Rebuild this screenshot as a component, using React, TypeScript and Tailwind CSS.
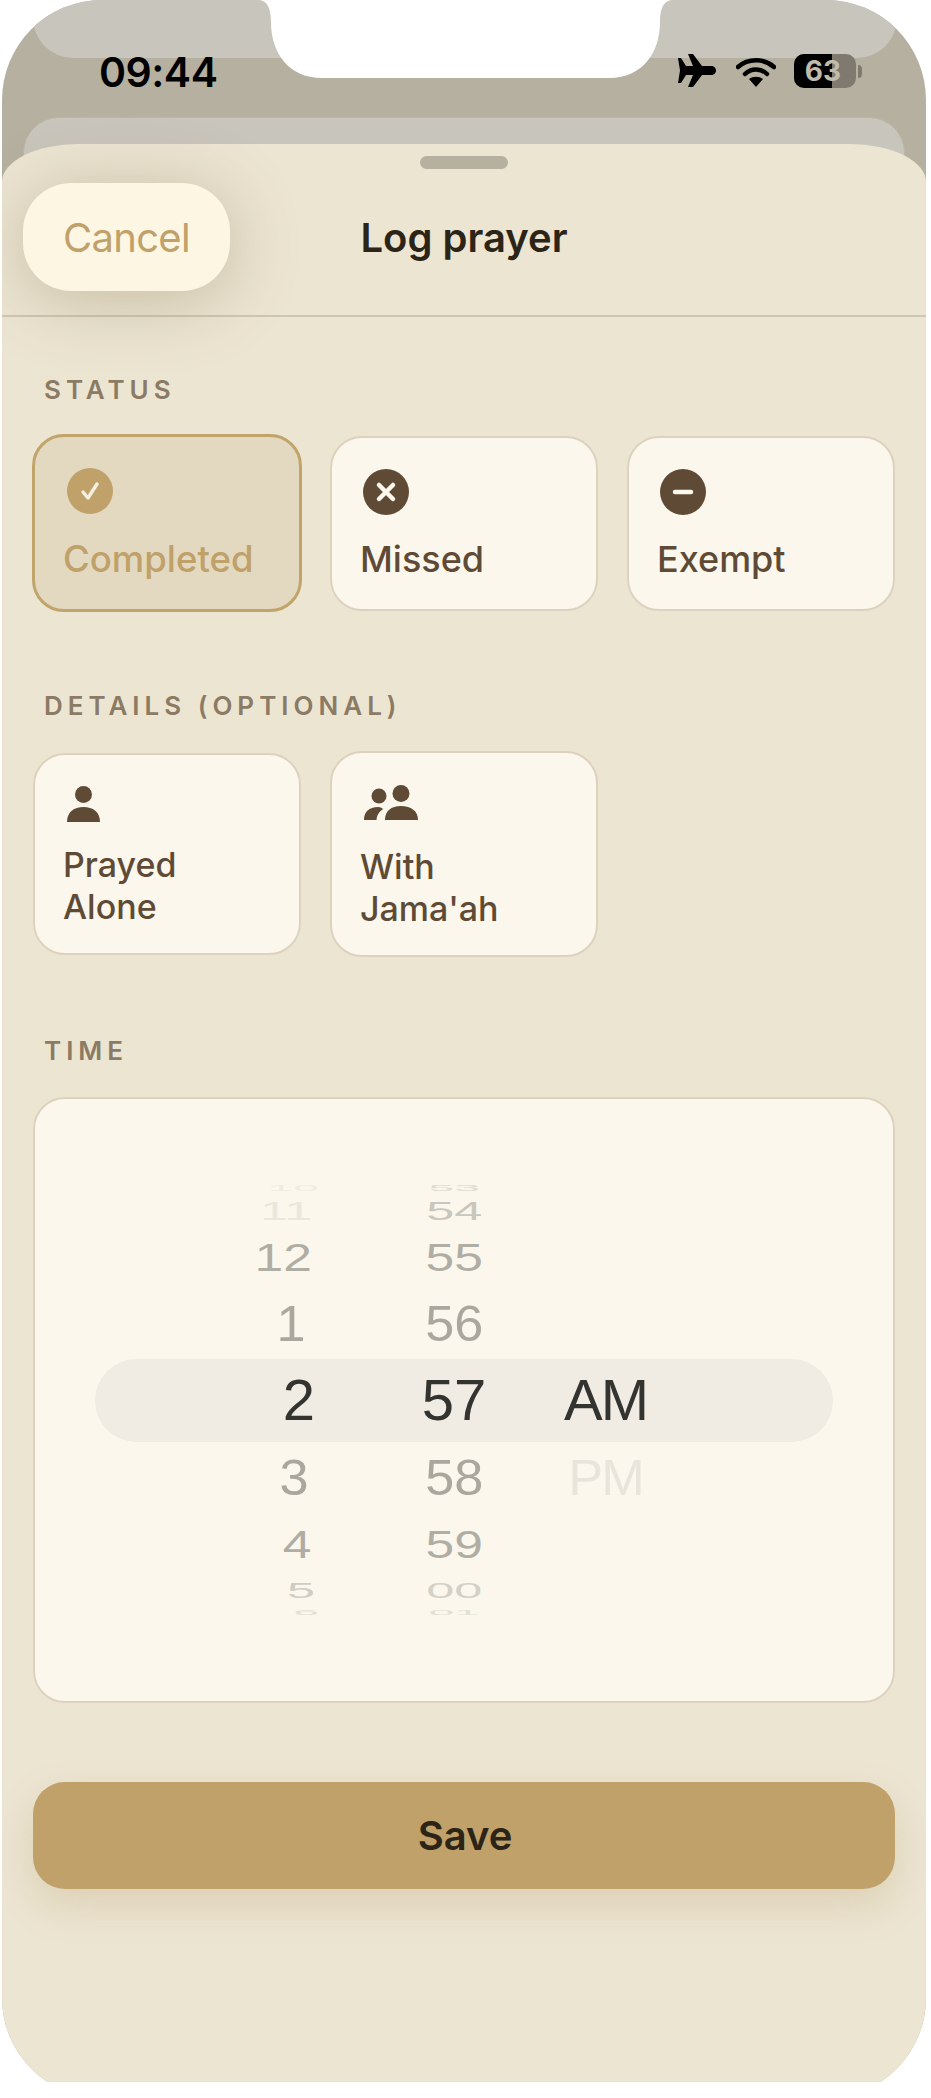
import { ReactNode } from 'react';

const uiFont = "font-['Inter',sans-serif]";

// rows of the time wheel, the outer ones squashed like a drum
const wheelRows = [
  { box: 'h-[6px]', top: '', scale: 'scale-x-[0.8] scale-y-[0.15]', shift: 'translate-x-[-6px]', hour: '10', min: '53', hourColor: 'text-[#efede3]', minColor: 'text-[#dfddd3]', period: '', periodColor: '' },
  { box: 'h-[17px]', top: 'mt-[12px]', scale: 'scale-x-[0.87] scale-y-[0.44]', shift: 'translate-x-[-13px]', hour: '11', min: '54', hourColor: 'text-[#e9e7de]', minColor: 'text-[#c9c7bd]', period: '', periodColor: '' },
  { box: 'h-[27px]', top: 'mt-[25px]', scale: 'scale-x-[0.89] scale-y-[0.66]', shift: 'translate-x-[-16px]', hour: '12', min: '55', hourColor: 'text-[#b0aea4]', minColor: 'text-[#b0aea4]', period: '', periodColor: '' },
  { box: 'h-[35px]', top: 'mt-[35px]', scale: 'scale-x-[0.9] scale-y-[0.85]', shift: 'translate-x-[-8px]', hour: '1', min: '56', hourColor: 'text-[#a9a79e]', minColor: 'text-[#a9a79e]', period: '', periodColor: '' },
  { box: 'h-[41px]', top: 'mt-[38px]', scale: '', shift: '', hour: '2', min: '57', hourColor: 'text-[#333330]', minColor: 'text-[#333330]', period: 'AM', periodColor: 'text-[#333330]' },
  { box: 'h-[34px]', top: 'mt-[40px]', scale: 'scale-x-[0.9] scale-y-[0.85]', shift: 'translate-x-[-5px]', hour: '3', min: '58', hourColor: 'text-[#a9a79e]', minColor: 'text-[#a9a79e]', period: 'PM', periodColor: 'text-[#e8e6dc]' },
  { box: 'h-[28px]', top: 'mt-[35px]', scale: 'scale-x-[0.89] scale-y-[0.68]', shift: 'translate-x-[-2px]', hour: '4', min: '59', hourColor: 'text-[#b0aea4]', minColor: 'text-[#b0aea4]', period: '', periodColor: '' },
  { box: 'h-[16px]', top: 'mt-[24px]', scale: 'scale-x-[0.87] scale-y-[0.39]', shift: 'translate-x-[2px]', hour: '5', min: '00', hourColor: 'text-[#cfcdc3]', minColor: 'text-[#d3d1c7]', period: '', periodColor: '' },
  { box: 'h-[5px]', top: 'mt-[13px]', scale: 'scale-x-[0.8] scale-y-[0.12]', shift: 'translate-x-[7px]', hour: '6', min: '01', hourColor: 'text-[#e2e0d6]', minColor: 'text-[#e2e0d6]', period: '', periodColor: '' },
];

const SectionLabel = ({ children }: { children: ReactNode }) => (
  <div className="ml-[42px] h-[26px] text-[26px] leading-[26px] font-semibold tracking-[5px] text-[#8b7b64]">{children}</div>
);

const IconCircle = ({ color, children }: { color: string; children: ReactNode }) => (
  <svg width="46" height="46" viewBox="0 0 46 46" className="block">
    <circle cx="23" cy="23" r="23" fill={color} />
    {children}
  </svg>
);

const StatusCard = ({ label, icon, selected }: { label: string; icon: ReactNode; selected?: boolean }) => (
  <div
    className={
      selected
        ? 'h-[178px] -mx-[1px] -mt-[2px] -mb-[1px] rounded-[32px] border-[3px] border-[#c0a46a] bg-[#e3d9c1] pl-[32px] pt-[31px]'
        : 'h-[175px] rounded-[32px] border-2 border-[#ddd2bd] bg-[#fcf7ec] pl-[31px] pt-[31px]'
    }
  >
    {icon}
    <div className={selected ? '-ml-[4px] mt-[23px] text-[36.5px] leading-[44px] font-medium text-[#bfa169]' : '-ml-[3px] mt-[22px] text-[36px] leading-[44px] font-medium text-[#5f4b35]'}>{label}</div>
  </div>
);

const Person = () => (
  <svg width="33" height="36" viewBox="0 0 33 36" className="block" fill="#5f4b35">
    <ellipse cx="16.5" cy="8.5" rx="8.5" ry="8.5" />
    <path d="M0 36 C0 26 7 21 16.5 21 C26 21 33 26 33 36 Z" />
  </svg>
);

const People = () => (
  <svg width="54" height="36" viewBox="0 0 54 36" className="block" fill="#5f4b35">
    <circle cx="15" cy="11" r="7.5" />
    <path d="M0 35 C0 27 5 22 14 22 C17 22 18 23 19 24 C15 27 13 30 12.5 35 Z" />
    <circle cx="37" cy="8.5" r="8.5" />
    <path d="M21 35 C21 26 27 21 37 21 C47 21 54 26 54 35 Z" />
  </svg>
);

const DetailCard = ({ lines, icon, tall }: { lines: string[]; icon: ReactNode; tall?: boolean }) => (
  <div
    className={
      tall
        ? 'h-[206px] -mt-[2px] -mb-[2px] rounded-[32px] border-2 border-[#ddd2bd] bg-[#fcf7ec] pl-[32px] pt-[32px]'
        : 'h-[202px] rounded-[32px] border-2 border-[#ddd2bd] bg-[#fcf7ec] pl-[32px] pt-[31px]'
    }
  >
    {icon}
    <div className={`${tall ? 'mt-[25px]' : 'mt-[22px]'} -ml-[4px] text-[34px] leading-[42px] font-medium text-[#5f4b35]`}>
      {lines.map((line) => (
        <div key={line}>{line}</div>
      ))}
    </div>
  </div>
);

const StatusBar = () => (
  <div className="relative flex h-[117px] items-start">
    <div className="ml-[97px] mt-[48px] text-[41px] leading-[48px] font-semibold tracking-[-0.5px] text-black">09:44</div>
    <div className="ml-auto mr-[64px] mt-[54px] flex items-start">
      <svg width="38" height="33" viewBox="0 0 38 33" className="block">
        <path
          d="M0 4 L3 4 L8 12 L15 12 L10 0 L15 0 L24 12 L33 12 C36 12 38 14 38 16.5 C38 19 36 21 33 21 L24 21 L15 33 L10 33 L15 21 L8 21 L3 29 L0 29 L2 16.5 Z"
          fill="#000"
        />
      </svg>
      <svg width="40" height="30" viewBox="0 0 40 30" className="ml-[20px] mt-[3px] block" fill="none">
        <path d="M2 10 C12 1 28 1 38 10" stroke="#000" strokeWidth="4.5" strokeLinecap="round" />
        <path d="M9 17 C15 11 25 11 31 17" stroke="#000" strokeWidth="4.5" strokeLinecap="round" />
        <path d="M13 22 C17 19 23 19 27 22 L20 30 Z" fill="#000" />
      </svg>
      <div className="relative ml-[18px] h-[34px] w-[62px] overflow-hidden rounded-[10px] bg-[#7e7a6f]">
        <div className="h-full w-[38px] bg-black" />
        <div className="absolute inset-0 pr-[4px] text-center text-[28px] leading-[34px] font-bold text-[#c0bbab]">63</div>
      </div>
      <div className="ml-[2px] mt-[11px] h-[13px] w-[4px] rounded-r-full bg-[#7e7a6f]" />
    </div>
  </div>
);

export default function App() {
  return (
    <div className={`h-[2082px] w-[931px] overflow-hidden bg-white ${uiFont}`}>
      <div className="relative ml-[2px] h-[2098px] w-[924px] overflow-hidden rounded-[100px] bg-[#b6b0a0]">
        {/* top ledge and notch */}
        <div className="absolute left-[31px] right-[29px] top-0 h-[58px] rounded-b-[40px] bg-[#c8c5bc]" />
        <svg width="924" height="80" viewBox="0 0 924 80" className="absolute left-0 top-0">
          <path d="M256 0 C266 0 269 10 269 22 C269 52 286 78 320 78 L607 78 C641 78 658 52 658 22 C658 10 661 0 671 0 Z" fill="#fff" />
        </svg>

        <StatusBar />

        {/* screen behind the sheet */}
        <div className="mx-[21px] h-[80px] rounded-t-[36px] border border-[#bdb6a4] bg-[#c8c5bc]" />

        {/* sheet */}
        <div className="relative -mt-[53px] h-[1954px] rounded-t-[76px_38px] bg-[#ece5d2]">
          <div className="pt-[12px]">
            <div className="mx-auto h-[13px] w-[88px] rounded-full bg-[#b6b0a0]" />
          </div>

          <div className="relative mt-[14px] h-[108px]">
            <div className="ml-[21px] flex h-[108px] w-[207px] items-center justify-center rounded-[48px] bg-[#fdf6e3] pt-[2px] text-[40px] font-normal tracking-[-0.7px] text-[#bfa169] shadow-[0_8px_70px_rgba(110,90,50,0.3)]">
              Cancel
            </div>
            <div className="absolute inset-x-0 top-0 flex h-[108px] items-center justify-center pt-[2px] text-[40px] font-semibold text-[#2c2416]">
              Log prayer
            </div>
          </div>
          <div className="mt-[24px] h-[2px] bg-[#cfc7b2]" />

          <div className="mt-[60px]">
            <SectionLabel>STATUS</SectionLabel>
          </div>
          <div className="ml-[31px] mt-[33px] grid w-[862px] grid-cols-3 gap-[29px]">
            <StatusCard
              selected
              label="Completed"
              icon={
                <IconCircle color="#bfa169">
                  <path d="M16 24 L21 30 L30 16" fill="none" stroke="#f5efdf" strokeWidth="3.5" strokeLinecap="round" strokeLinejoin="round" />
                </IconCircle>
              }
            />
            <StatusCard
              label="Missed"
              icon={
                <IconCircle color="#5f4b35">
                  <path d="M16 16 L30 30 M30 16 L16 30" fill="none" stroke="#fcf7ec" strokeWidth="4.5" strokeLinecap="round" />
                </IconCircle>
              }
            />
            <StatusCard
              label="Exempt"
              icon={
                <IconCircle color="#5f4b35">
                  <path d="M15 23 L31 23" fill="none" stroke="#fcf7ec" strokeWidth="4.5" strokeLinecap="round" />
                </IconCircle>
              }
            />
          </div>

          <div className="mt-[82px]">
            <SectionLabel>DETAILS (OPTIONAL)</SectionLabel>
          </div>
          <div className="ml-[31px] mt-[34px] grid w-[862px] grid-cols-3 gap-[29px]">
            <DetailCard lines={['Prayed', 'Alone']} icon={<Person />} />
            <DetailCard tall lines={['With', "Jama'ah"]} icon={<People />} />
          </div>

          <div className="mt-[83px]">
            <SectionLabel>TIME</SectionLabel>
          </div>

          {/* time wheel */}
          <div className="relative ml-[31px] mt-[33px] h-[606px] w-[862px] rounded-[32px] border-2 border-[#ddd2bd] bg-[#fcf7ec] pt-[85px] font-['Liberation_Sans',sans-serif] text-[58px] font-normal">
            <div className="absolute left-[60px] top-[260px] h-[83px] w-[738px] rounded-full bg-[#f0ebe3]" />
            <div className="relative">
              {wheelRows.map((row) => (
                <div key={row.min} className={`flex items-center ${row.box} ${row.top}`}>
                  <div className="ml-[214px] w-[100px] text-center">
                    <span className={`inline-block leading-none ${row.scale} ${row.shift} ${row.hourColor}`}>{row.hour}</span>
                  </div>
                  <div className="ml-[55px] w-[100px] text-center">
                    <span className={`inline-block leading-none ${row.scale} ${row.minColor}`}>{row.min}</span>
                  </div>
                  <div className="ml-[41px] w-[120px] pl-[1px] text-center">
                    <span className={`inline-block leading-none tracking-[-2px] ${row.scale} ${row.periodColor}`}>{row.period}</span>
                  </div>
                </div>
              ))}
            </div>
          </div>

          <div className="ml-[31px] mt-[79px] flex h-[107px] w-[862px] items-center justify-center rounded-[32px] bg-[#bfa169] pl-[2px] text-[40px] font-semibold text-[#2c2416] shadow-[0_16px_40px_rgba(160,125,60,0.2)]">
            Save
          </div>
        </div>
      </div>
    </div>
  );
}
